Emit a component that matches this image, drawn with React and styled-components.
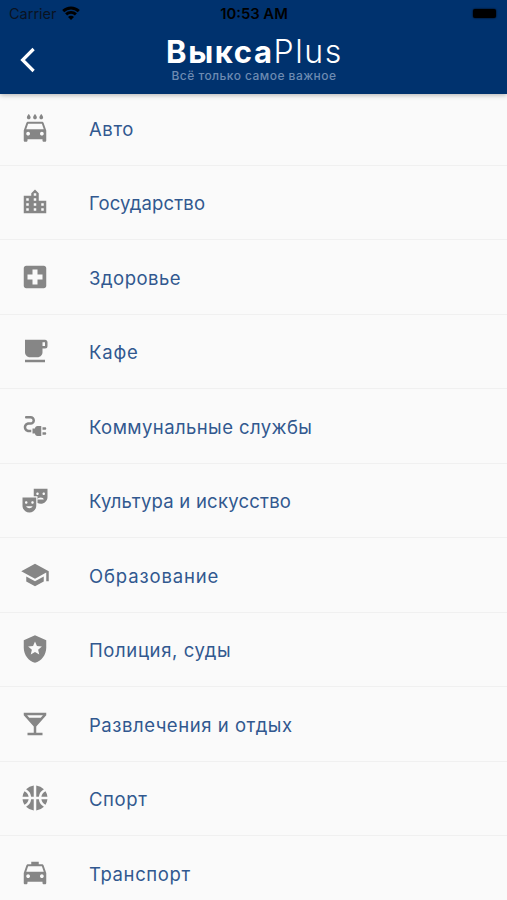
import React from 'react';
import styled, { createGlobalStyle } from 'styled-components';
import {
	MdLocalCarWash,
	MdLocationCity,
	MdLocalHospital,
	MdLocalCafe,
	MdElectricalServices,
	MdTheaterComedy,
	MdSchool,
	MdLocalPolice,
	MdLocalBar,
	MdSportsBasketball,
	MdLocalTaxi,
} from 'react-icons/md';

const COLORS = {
	primary: '#00326e',
	text: '#31588f',
	icon: '#868686',
	background: '#fafafa',
	divider: '#f0f0f0',
};

const categories = [
	{ title: 'Авто', icon: MdLocalCarWash, spacing: 0.6 },
	{ title: 'Государство', icon: MdLocationCity, spacing: 0.15 },
	{ title: 'Здоровье', icon: MdLocalHospital, spacing: 0.5 },
	{ title: 'Кафе', icon: MdLocalCafe, spacing: 0.8 },
	{ title: 'Коммунальные службы', icon: MdElectricalServices, spacing: 0.42 },
	{ title: 'Культура и искусство', icon: MdTheaterComedy, spacing: 0.23 },
	{ title: 'Образование', icon: MdSchool, spacing: 0.86 },
	{ title: 'Полиция, суды', icon: MdLocalPolice, spacing: 0.62 },
	{ title: 'Развлечения и отдых', icon: MdLocalBar, spacing: 0.54 },
	{ title: 'Спорт', icon: MdSportsBasketball, spacing: 0.6 },
	{ title: 'Транспорт', icon: MdLocalTaxi, spacing: 0.6 },
];

const App = () => (
	<Screen>
		<GlobalStyle />
		<Header>
			<StatusBar>
				<Carrier>
					Carrier
					<svg width="18" height="14" viewBox="0 0 18 14" fill="none" stroke="#000" strokeWidth="2.9">
						<path d="M1.2 5.1a11.2 11.2 0 0 1 15.6 0" />
						<path d="M4.1 8.4a7 7 0 0 1 9.8 0" />
						<path d="M9 14 6 10.9a4.2 4.2 0 0 1 6 0z" fill="#000" stroke="none" />
					</svg>
				</Carrier>
				<Time>10:53 AM</Time>
				<Battery />
			</StatusBar>
			<NavBar>
				<BackButton aria-label="Назад">
					<svg width="16" height="26" viewBox="0 0 16 26" fill="none" stroke="#fff" strokeWidth="3.2">
						<path d="M13.6 2 2.6 13l11 11" />
					</svg>
				</BackButton>
				<Brand>
					<Title>
						<Bold>Выкса</Bold>
						<Light>Plus</Light>
					</Title>
					<Subtitle>Всё только самое важное</Subtitle>
				</Brand>
				<div />
			</NavBar>
		</Header>
		<List>
			{categories.map(({ title, icon: Icon, spacing }) => (
				<Row key={title}>
					<Icon />
					<Label $spacing={spacing}>{title}</Label>
				</Row>
			))}
		</List>
	</Screen>
);

export default App;

const GlobalStyle = createGlobalStyle`
    body {
        margin: 0;
        background: ${COLORS.background};
        font-family: Inter, sans-serif;
        overflow: hidden;
    }
`;
const Screen = styled.div`
    height: 900px;
    overflow: hidden;
    background: ${COLORS.background};
`;
const Header = styled.header`
    position: relative;
    z-index: 1;
    height: 94px;
    background: ${COLORS.primary};
    box-shadow: 0 1px 5px rgba(0, 0, 0, 0.3);
`;
const StatusBar = styled.div`
    display: grid;
    grid-template-columns: 1fr auto 1fr;
    align-items: center;
    height: 28px;
    padding: 0 11px 0 9px;
    color: #000;
    font-size: 15px;
    line-height: 28px;
`;
const Carrier = styled.div`
    display: flex;
    align-items: center;
    gap: 5px;
    color: #0a1322;
    font-size: 14.5px;
    svg {
        margin-top: -2px;
    }
`;
const Time = styled.div`
    padding-left: 3px;
    font-size: 14.8px;
    font-weight: 600;
`;
const Battery = styled.div`
    justify-self: end;
    width: 23px;
    height: 9px;
    margin-top: -1px;
    border-radius: 2px;
    background: #000;
    box-shadow: 0 0 2px #000;
`;
const NavBar = styled.div`
    display: grid;
    grid-template-columns: 1fr auto 1fr;
    height: 66px;
`;
const BackButton = styled.button`
    justify-self: start;
    align-self: start;
    display: flex;
    margin: 19px 0 0 20px;
    padding: 0;
    border: 0;
    background: none;
`;
const Brand = styled.div`
    display: flex;
    flex-direction: column;
    align-items: center;
    padding-top: 6px;
    padding-left: 2px;
    white-space: nowrap;
`;
const Title = styled.div`
    display: flex;
    color: #fff;
    font-size: 31px;
    line-height: 35px;
`;
const Bold = styled.span`
    font-weight: 700;
    letter-spacing: 1.6px;
`;
const Light = styled.span`
    font-size: 32px;
    font-weight: 300;
    letter-spacing: 1.6px;
`;
const Subtitle = styled.div`
    margin-left: -1px;
    color: #6d8bb2;
    font-size: 12px;
    font-weight: 500;
    letter-spacing: 0.46px;
    line-height: 14px;
`;
const List = styled.div`
    margin-top: -3px;
`;
const Row = styled.div`
    display: flex;
    align-items: center;
    box-sizing: border-box;
    height: 74.5px;
    padding-left: 20px;
    border-bottom: 1px solid ${COLORS.divider};
    svg {
        flex: none;
        width: 30px;
        height: 30px;
        color: ${COLORS.icon};
    }
`;
const Label = styled.div`
    margin-left: 39px;
    padding-top: 2px;
    color: ${COLORS.text};
    font-size: 18.5px;
    letter-spacing: ${props => props.$spacing}px;
    white-space: nowrap;
`;
